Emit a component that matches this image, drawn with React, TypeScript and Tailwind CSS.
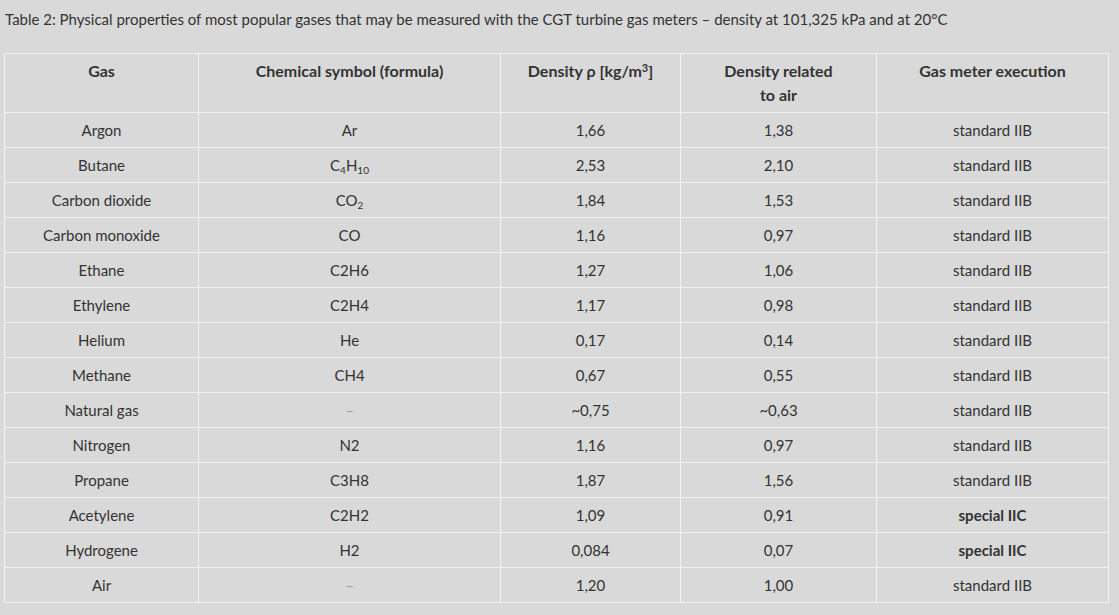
import React from 'react';

type Row = {
  gas: string;
  formula: React.ReactNode;
  density: string;
  relative: string;
  execution: string;
  special?: boolean;
};

const Dash = () => <span className="text-[#a3a3a3]">–</span>;

const rows: Row[] = [
  { gas: 'Argon', formula: 'Ar', density: '1,66', relative: '1,38', execution: 'standard IIB' },
  { gas: 'Butane', formula: <>C<sub>4</sub>H<sub>10</sub></>, density: '2,53', relative: '2,10', execution: 'standard IIB' },
  { gas: 'Carbon dioxide', formula: <>CO<sub>2</sub></>, density: '1,84', relative: '1,53', execution: 'standard IIB' },
  { gas: 'Carbon monoxide', formula: 'CO', density: '1,16', relative: '0,97', execution: 'standard IIB' },
  { gas: 'Ethane', formula: 'C2H6', density: '1,27', relative: '1,06', execution: 'standard IIB' },
  { gas: 'Ethylene', formula: 'C2H4', density: '1,17', relative: '0,98', execution: 'standard IIB' },
  { gas: 'Helium', formula: 'He', density: '0,17', relative: '0,14', execution: 'standard IIB' },
  { gas: 'Methane', formula: 'CH4', density: '0,67', relative: '0,55', execution: 'standard IIB' },
  { gas: 'Natural gas', formula: <Dash />, density: '~0,75', relative: '~0,63', execution: 'standard IIB' },
  { gas: 'Nitrogen', formula: 'N2', density: '1,16', relative: '0,97', execution: 'standard IIB' },
  { gas: 'Propane', formula: 'C3H8', density: '1,87', relative: '1,56', execution: 'standard IIB' },
  { gas: 'Acetylene', formula: 'C2H2', density: '1,09', relative: '0,91', execution: 'special IIC', special: true },
  { gas: 'Hydrogene', formula: 'H2', density: '0,084', relative: '0,07', execution: 'special IIC', special: true },
  { gas: 'Air', formula: <Dash />, density: '1,20', relative: '1,00', execution: 'standard IIB' },
];

export default function App() {
  return (
    <div
      className="min-h-[615px] bg-[#d9d9d9] px-1 pt-[7px] text-[#333333]"
      style={{ fontFamily: 'Lato, "Liberation Sans", sans-serif' }}
    >
      <p className="pl-px text-[15px] leading-6">
        Table 2: Physical properties of most popular gases that may be measured with the CGT turbine gas meters – density at 101,325 kPa and at 20°C
      </p>

      <table className="mt-[22px] w-[1104px] table-fixed border-collapse text-[15px] [&_sub]:text-[10px]">
        <colgroup>
          <col className="w-[194px]" />
          <col className="w-[302px]" />
          <col className="w-[180px]" />
          <col className="w-[196px]" />
          <col className="w-[232px]" />
        </colgroup>
        <thead>
          <tr className="h-[59px] text-[16px]">
            <th className="border border-[#f2f2f2] px-2 pt-[5px] pb-[5px] align-top font-bold leading-6">Gas</th>
            <th className="border border-[#f2f2f2] px-2 pt-[5px] pb-[5px] align-top font-bold leading-6">Chemical symbol (formula)</th>
            <th className="border border-[#f2f2f2] px-2 pt-[5px] pb-[5px] align-top font-bold leading-6">
              Density ρ [kg/m<sup className="text-[11px]">3</sup>]
            </th>
            <th className="border border-[#f2f2f2] px-2 pt-[5px] pb-[5px] align-top font-bold leading-6">
              Density related
              <br />
              to air
            </th>
            <th className="border border-[#f2f2f2] px-2 pt-[5px] pb-[5px] align-top font-bold leading-6">Gas meter execution</th>
          </tr>
        </thead>
        <tbody>
          {rows.map((r) => (
            <tr key={r.gas} className="h-[35px]">
              <td className="border border-[#f2f2f2] px-2 text-center leading-6">{r.gas}</td>
              <td className="border border-[#f2f2f2] px-2 text-center leading-6">{r.formula}</td>
              <td className="border border-[#f2f2f2] px-2 text-center leading-6">{r.density}</td>
              <td className="border border-[#f2f2f2] px-2 text-center leading-6">{r.relative}</td>
              <td className={`border border-[#f2f2f2] px-2 text-center leading-6 ${r.special ? 'font-bold' : ''}`}>
                {r.execution}
              </td>
            </tr>
          ))}
        </tbody>
      </table>
    </div>
  );
}
